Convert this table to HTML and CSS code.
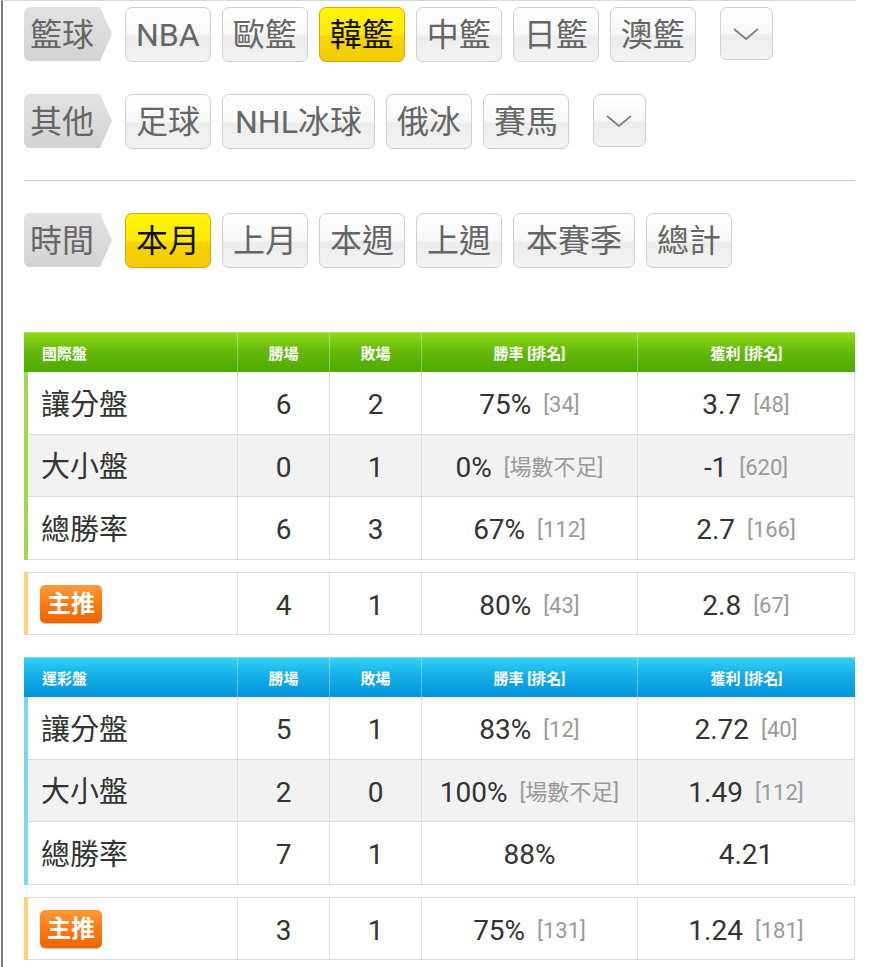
FILE: index.html
```html
<!DOCTYPE html>
<html lang="zh-Hant">
<head>
<meta charset="utf-8">
<title>戰績</title>
<link rel="stylesheet" href="styles.css">
</head>
<body>
<div class="page">
  <div class="filter-row">
    <span class="tag">籃球</span>
    <button class="btn">NBA</button>
    <button class="btn">歐籃</button>
    <button class="btn btn--on">韓籃</button>
    <button class="btn">中籃</button>
    <button class="btn">日籃</button>
    <button class="btn">澳籃</button>
    <button class="btn btn--more"><svg width="26" height="12" viewBox="0 0 26 12"><polyline points="1,1 13,11 25,1" fill="none" stroke="#808080" stroke-width="1.8"/></svg></button>
  </div>
  <div class="filter-row">
    <span class="tag">其他</span>
    <button class="btn">足球</button>
    <button class="btn btn--wide">NHL冰球</button>
    <button class="btn">俄冰</button>
    <button class="btn">賽馬</button>
    <button class="btn btn--more"><svg width="26" height="12" viewBox="0 0 26 12"><polyline points="1,1 13,11 25,1" fill="none" stroke="#808080" stroke-width="1.8"/></svg></button>
  </div>
  <hr class="divider">
  <div class="filter-row">
    <span class="tag">時間</span>
    <button class="btn btn--on">本月</button>
    <button class="btn">上月</button>
    <button class="btn">本週</button>
    <button class="btn">上週</button>
    <button class="btn btn--wide">本賽季</button>
    <button class="btn">總計</button>
  </div>

  <section class="stats stats--intl">
    <div class="grid head">
      <div class="c first">國際盤</div><div class="c">勝場</div><div class="c">敗場</div><div class="c">勝率 [排名]</div><div class="c">獲利 [排名]</div>
    </div>
    <div class="body">
      <div class="grid row"><div class="c first">讓分盤</div><div class="c">6</div><div class="c">2</div><div class="c">75% <span class="rk">[34]</span></div><div class="c">3.7 <span class="rk">[48]</span></div></div>
      <div class="grid row alt"><div class="c first">大小盤</div><div class="c">0</div><div class="c">1</div><div class="c">0% <span class="rk">[場數不足]</span></div><div class="c">-1 <span class="rk">[620]</span></div></div>
      <div class="grid row"><div class="c first">總勝率</div><div class="c">6</div><div class="c">3</div><div class="c">67% <span class="rk">[112]</span></div><div class="c">2.7 <span class="rk">[166]</span></div></div>
    </div>
    <div class="body pick">
      <div class="grid row"><div class="c first"><span class="badge">主推</span></div><div class="c">4</div><div class="c">1</div><div class="c">80% <span class="rk">[43]</span></div><div class="c">2.8 <span class="rk">[67]</span></div></div>
    </div>
  </section>

  <section class="stats stats--lottery">
    <div class="grid head">
      <div class="c first">運彩盤</div><div class="c">勝場</div><div class="c">敗場</div><div class="c">勝率 [排名]</div><div class="c">獲利 [排名]</div>
    </div>
    <div class="body">
      <div class="grid row"><div class="c first">讓分盤</div><div class="c">5</div><div class="c">1</div><div class="c">83% <span class="rk">[12]</span></div><div class="c">2.72 <span class="rk">[40]</span></div></div>
      <div class="grid row alt"><div class="c first">大小盤</div><div class="c">2</div><div class="c">0</div><div class="c">100% <span class="rk">[場數不足]</span></div><div class="c">1.49 <span class="rk">[112]</span></div></div>
      <div class="grid row"><div class="c first">總勝率</div><div class="c">7</div><div class="c">1</div><div class="c">88%</div><div class="c">4.21</div></div>
    </div>
    <div class="body pick">
      <div class="grid row"><div class="c first"><span class="badge">主推</span></div><div class="c">3</div><div class="c">1</div><div class="c">75% <span class="rk">[131]</span></div><div class="c">1.24 <span class="rk">[181]</span></div></div>
    </div>
  </section>
</div>
</body>
</html>
```
FILE: styles.css
```css
* { box-sizing: border-box; }
html, body { margin: 0; padding: 0; background: #fff; }
body {
  font-family: Roboto, "Noto Sans CJK TC", "Noto Sans", sans-serif;
  color: #333;
}
.page {
  margin-left: 1px;
  border-left: 2px solid #7c7c7c;
  border-top: 1px solid #d8d8d8;
  min-height: 967px;
  padding: 6px 0 0 21px;
  width: 855px;
}
.filter-row {
  display: flex;
  align-items: flex-start;
  gap: 11px;
  height: 55px;
  margin-bottom: 32px;
}
.tag {
  width: 88px;
  height: 54px;
  margin-right: 2px;
  padding: 2px 0 0 6px;
  display: flex;
  align-items: center;
  font-size: 32px;
  line-height: 1;
  color: #666;
  background: linear-gradient(#e3e3e3, #d3d3d3);
  border-radius: 6px 0 0 6px;
  clip-path: polygon(0 0, 76px 0, 100% 50%, 76px 100%, 0 100%);
}
.btn {
  height: 55px;
  padding: 0 10px;
  border: 1px solid #cfcfcf;
  border-radius: 7px;
  background: linear-gradient(#ffffff 0%, #f7f7f7 50%, #ececec 53%, #f3f3f3 100%);
  font-family: inherit;
  font-size: 32px;
  line-height: 1;
  color: #666;
  display: flex;
  align-items: center;
  justify-content: center;
}
.btn--wide { padding: 0 12px; }
.btn--on {
  background: linear-gradient(#fff500 0%, #ffe900 50%, #f7d500 53%, #f2cb00 100%);
  border-color: #d6a800;
  color: #111;
}
.btn--more {
  width: 53px;
  height: 53px;
  padding: 0;
  margin-left: 13px;
}
.divider {
  border: 0;
  border-top: 1px solid #cccccc;
  margin: -1px 0 32px;
  width: 831px;
}
.filter-row:last-of-type { margin-bottom: 0; }

.stats { width: 831px; }
.stats--intl { margin-top: 64px; }
.stats--lottery { margin-top: 22px; }
.grid {
  display: grid;
  grid-template-columns: 214px 92px 92px 216px 217px;
}
.body .grid {
  grid-template-columns: 210px 92px 92px 216px 216px;
}
.head {
  height: 40px;
  color: #fff;
  font-size: 15px;
  font-weight: bold;
}
.stats--intl .head {
  background: linear-gradient(#8fd817 0%, #66ba0a 45%, #4ea900 100%);
  border-top: 1px solid #a6e24a;
}
.stats--lottery .head {
  background: linear-gradient(#34d1f4 0%, #14aee8 45%, #0394dc 100%);
  border-top: 1px solid #7ee0f8;
}
.head .c {
  display: flex;
  align-items: center;
  justify-content: center;
  border-right: 1px solid rgba(255, 255, 255, 0.35);
}
.head .c:last-child { border-right: 0; }
.head .first { justify-content: flex-start; padding-left: 18px; }

.body {
  border-left: 4px solid #a2d84a;
  border-right: 1px solid #dcdcdc;
}
.stats--lottery .body { border-left-color: #7fd6f4; }
.body.pick {
  margin-top: 12px;
  border-left-color: #ffd27a;
  border-top: 1px solid #dcdcdc;
}
.stats--lottery .body.pick { border-left-color: #ffd27a; }
.row {
  height: 63px;
  border-bottom: 1px solid #dcdcdc;
  background: #fff;
}
.row.alt { background: #f2f2f2; height: 62px; }
.pick .row { height: 62px; }
.row .c {
  display: flex;
  align-items: center;
  justify-content: center;
  padding-top: 4px;
  font-size: 28px;
  line-height: 1;
  color: #333;
  border-right: 1px solid #dcdcdc;
  white-space: nowrap;
}
.row .c:last-child { border-right: 0; }
.row .first { justify-content: flex-start; padding-left: 13px; font-size: 29px; }
.pick .row .first { padding-top: 0; }
.rk {
  font-size: 22px;
  color: #9a9a9a;
  margin-left: 12px;
}
.badge {
  display: inline-flex;
  align-items: center;
  justify-content: center;
  width: 62px;
  height: 38px;
  border-radius: 5px;
  background: linear-gradient(#ff9a3a 0%, #fb7a14 50%, #ec6400 100%);
  box-shadow: 0 1px 1px rgba(160, 70, 0, 0.35);
  color: #fff;
  font-size: 24px;
  font-weight: bold;
  margin-left: -1px;
}
```
